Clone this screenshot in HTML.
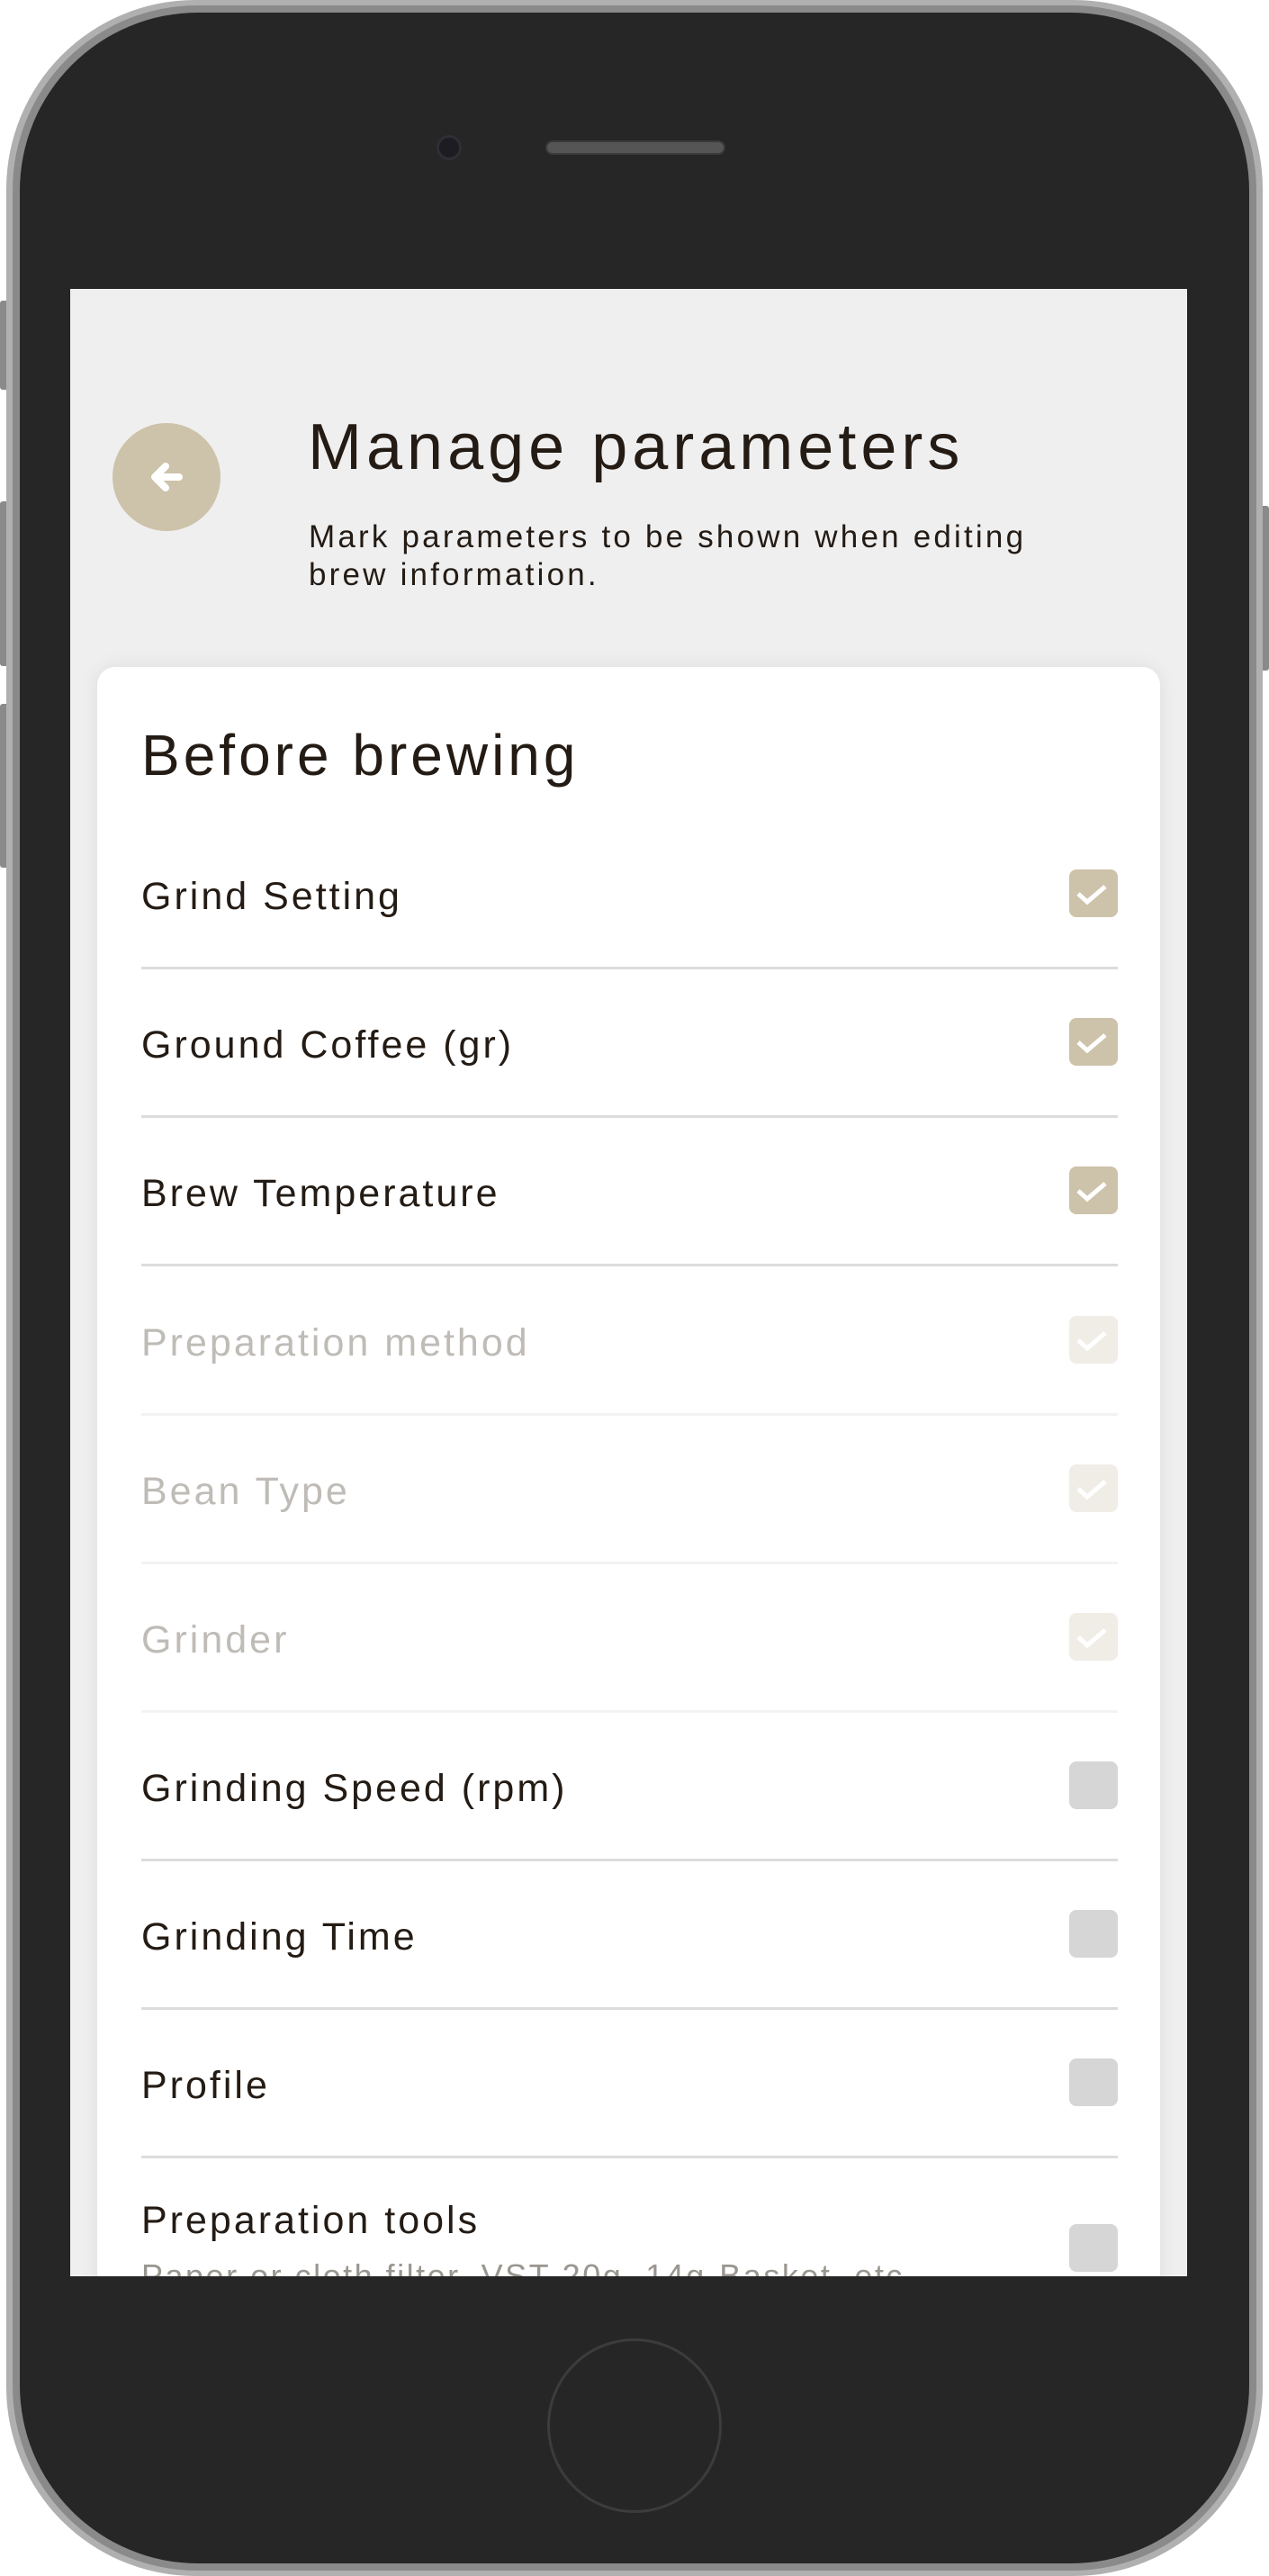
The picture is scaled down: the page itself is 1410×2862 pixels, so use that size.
<!DOCTYPE html>
<html><head><meta charset="utf-8"><style>
*{margin:0;padding:0;box-sizing:border-box}
body{width:1410px;height:2862px;background:#fff;position:relative;overflow:hidden;font-family:"Liberation Sans",sans-serif;color:#231b14}
.abs{position:absolute}
.btn{position:absolute;background:#8a8a8a;border-radius:3px}
.row{position:absolute;left:157px;font-size:43px;letter-spacing:3px;line-height:50px;white-space:nowrap}
.div{position:absolute;left:157px;width:1085px;height:3px;background:#dcdcdc}
.div.l{background:#f3f3f3}
.cb{position:absolute;left:1188px;width:54px;height:53px;border-radius:8px;background:#cdc2aa}
.cb svg{position:absolute;left:0;top:0}
.cb.d{background:#f0ede7}
.cb.u{background:#d6d6d6}
.dis{color:#bfbcb7}
</style></head><body>
<div class="btn" style="left:0;top:334px;width:10px;height:99px"></div>
<div class="btn" style="left:0;top:557px;width:10px;height:183px"></div>
<div class="btn" style="left:0;top:782px;width:10px;height:182px"></div>
<div class="btn" style="left:1400px;top:562px;width:10px;height:183px"></div>
<div class="abs" style="left:7px;top:0;width:1396px;height:2862px;border-radius:210px;background:#b0b0b0"></div>
<div class="abs" style="left:14px;top:6px;width:1382px;height:2850px;border-radius:205px;background:#8a8a8a"></div>
<div class="abs" style="left:22px;top:14px;width:1366px;height:2834px;border-radius:198px;background:#262626"></div>
<div class="abs" style="left:485px;top:150px;width:28px;height:28px;border-radius:50%;background:#1c1c22;border:3px solid #2e2e36"></div>
<div class="abs" style="left:606px;top:156px;width:200px;height:16px;border-radius:8px;background:#555;border:2px solid #3a3a3a"></div>
<div class="abs" style="left:608px;top:2598px;width:194px;height:194px;border-radius:50%;border:3px solid #3c3c3c;background:#262626"></div>
<div class="abs" style="left:78px;top:321px;width:1241px;height:2208px;background:#efefef;overflow:hidden">
  <div class="abs" style="left:47px;top:149px;width:120px;height:120px;border-radius:50%;background:#cdc2aa">
    <svg width="120" height="120" viewBox="0 0 120 120"><path d="M74 60H48M59 48L47 60L59 72" stroke="#fff" stroke-width="8" fill="none" stroke-linecap="round" stroke-linejoin="round"/></svg>
  </div>
  <div class="abs" style="left:264px;top:134px;font-size:72px;line-height:84px;letter-spacing:5px;white-space:nowrap">Manage parameters</div>
  <div class="abs" style="left:265px;top:255px;font-size:35px;line-height:42px;letter-spacing:3.2px;white-space:nowrap">Mark parameters to be shown when editing<br>brew information.</div>
  <div class="abs" style="left:30px;top:420px;width:1181px;height:1900px;background:#fff;border-radius:20px;box-shadow:0 0 20px rgba(0,0,0,0.08)"></div>
  <div class="abs" style="left:79px;top:480px;font-size:64px;line-height:76px;letter-spacing:4px;white-space:nowrap">Before brewing</div>
</div>
<div class="abs" style="left:0;top:0;width:1410px;height:2529px;overflow:hidden">
<div class="row" style="top:971px">Grind Setting</div>
<div class="cb" style="top:966px"><svg width="54" height="53"><path d="M10 27L20 36L40 19" stroke="#fff" stroke-width="5" fill="none"/></svg></div>
<div class="div" style="top:1074px"></div>
<div class="row" style="top:1136px">Ground Coffee (gr)</div>
<div class="cb" style="top:1131px"><svg width="54" height="53"><path d="M10 27L20 36L40 19" stroke="#fff" stroke-width="5" fill="none"/></svg></div>
<div class="div" style="top:1239px"></div>
<div class="row" style="top:1301px">Brew Temperature</div>
<div class="cb" style="top:1296px"><svg width="54" height="53"><path d="M10 27L20 36L40 19" stroke="#fff" stroke-width="5" fill="none"/></svg></div>
<div class="div" style="top:1404px"></div>
<div class="row dis" style="top:1467px">Preparation method</div>
<div class="cb d" style="top:1462px"><svg width="54" height="53"><path d="M10 27L20 36L40 19" stroke="#fff" stroke-width="5" fill="none"/></svg></div>
<div class="div l" style="top:1570px"></div>
<div class="row dis" style="top:1632px">Bean Type</div>
<div class="cb d" style="top:1627px"><svg width="54" height="53"><path d="M10 27L20 36L40 19" stroke="#fff" stroke-width="5" fill="none"/></svg></div>
<div class="div l" style="top:1735px"></div>
<div class="row dis" style="top:1797px">Grinder</div>
<div class="cb d" style="top:1792px"><svg width="54" height="53"><path d="M10 27L20 36L40 19" stroke="#fff" stroke-width="5" fill="none"/></svg></div>
<div class="div l" style="top:1900px"></div>
<div class="row" style="top:1962px">Grinding Speed (rpm)</div>
<div class="cb u" style="top:1957px"></div>
<div class="div" style="top:2065px"></div>
<div class="row" style="top:2127px">Grinding Time</div>
<div class="cb u" style="top:2122px"></div>
<div class="div" style="top:2230px"></div>
<div class="row" style="top:2292px">Profile</div>
<div class="cb u" style="top:2287px"></div>
<div class="div" style="top:2395px"></div>
<div class="row" style="top:2442px">Preparation tools</div>
<div class="row" style="top:2504px;font-size:36px;letter-spacing:2.5px;color:#9a9690">Paper or cloth filter, VST-20g, 14g-Basket, etc.</div>
<div class="cb u" style="top:2471px"></div>
</div>
</body></html>
